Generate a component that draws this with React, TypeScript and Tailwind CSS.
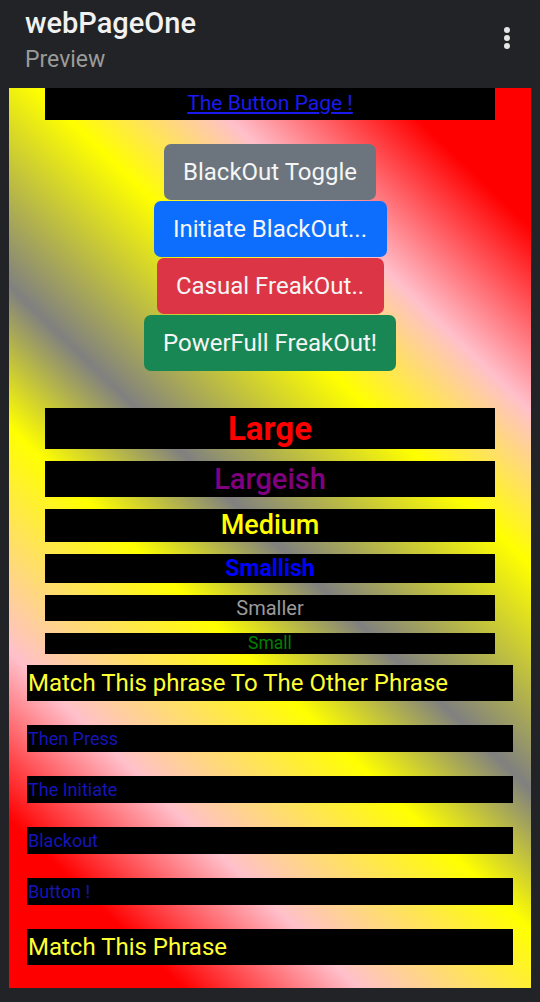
const buttons = [
  { label: "BlackOut Toggle", className: "w-[212px] bg-[#6c757d]" },
  { label: "Initiate BlackOut...", className: "w-[233px] bg-[#0d6efd]" },
  { label: "Casual FreakOut..", className: "w-[227px] bg-[#dc3545]" },
  { label: "PowerFull FreakOut!", className: "w-[252px] bg-[#198754]" },
];

const sizes = [
  { label: "Large", className: "h-[41px] text-[33px] font-bold text-[#ff0000]" },
  { label: "Largeish", className: "h-[36px] text-[29px] font-medium text-[#800080]" },
  { label: "Medium", className: "h-[33px] text-[27px] font-medium text-[#ffff00]" },
  { label: "Smallish", className: "h-[29px] text-[23px] font-bold text-[#0000ff]" },
  { label: "Smaller", className: "h-[26px] text-[20px] text-[#9a9a9a]" },
  { label: "Small", className: "h-[21px] text-[17.5px] text-[#008000]" },
];

const steps = ["Then Press", "The Initiate", "Blackout", "Button !"];

export default function App() {
  return (
    <div className="min-h-[1002px] bg-[#222326] font-['Roboto',sans-serif]">
      {/* App bar */}
      <header className="h-[88px] flex items-start justify-between pl-[25px] pr-[30px] pt-[4px]">
        <div>
          <h1 className="text-[29px] leading-[38px] font-medium text-[#f1f1f1]">webPageOne</h1>
          <p className="text-[23px] leading-[36px] text-[#9b9b9b]">Preview</p>
        </div>
        {/* overflow menu */}
        <div className="mt-[23px] flex flex-col gap-[2px]">
          <span className="w-[6px] h-[6px] rounded-full bg-[#e6e6e6]" />
          <span className="w-[6px] h-[6px] rounded-full bg-[#e6e6e6]" />
          <span className="w-[6px] h-[6px] rounded-full bg-[#e6e6e6]" />
        </div>
      </header>

      {/* Page preview */}
      <div className="px-[9px] pb-[14px]">
        <div className="h-[900px] bg-[linear-gradient(224deg,red_0%,red_10%,pink_23%,yellow_34%,gray_50%,yellow_60%,pink_76%,red_88%,red_100%)]">
          <div className="mx-[36px] h-[32px] bg-black flex items-center justify-center">
            <a href="#" className="text-[21px] text-[#1a1aee] underline">
              The Button Page !
            </a>
          </div>

          <div className="mt-[24px] flex flex-col items-center gap-px">
            {buttons.map((b) => (
              <button
                key={b.label}
                className={`h-[56px] rounded-[7px] text-[24px] text-[#f5f5f5] flex items-center justify-center ${b.className}`}
              >
                {b.label}
              </button>
            ))}
          </div>

          <div className="mt-[37px] mx-[36px] flex flex-col gap-[12px]">
            {sizes.map((s) => (
              <div key={s.label} className={`bg-black flex items-center justify-center leading-none ${s.className}`}>
                {s.label}
              </div>
            ))}
          </div>

          <div className="mt-[11px] mx-[18px] flex flex-col gap-[24px]">
            <div className="h-[36px] bg-black flex items-center pl-px text-[24px] text-[#ffff33]">
              Match This phrase To The Other Phrase
            </div>
            {steps.map((t) => (
              <div key={t} className="h-[27px] bg-black flex items-center pl-px text-[18px] text-[#1515b8]">
                {t}
              </div>
            ))}
            <div className="h-[36px] bg-black flex items-center pl-px text-[24px] text-[#ffff33]">
              Match This Phrase
            </div>
          </div>
        </div>
      </div>
    </div>
  );
}
